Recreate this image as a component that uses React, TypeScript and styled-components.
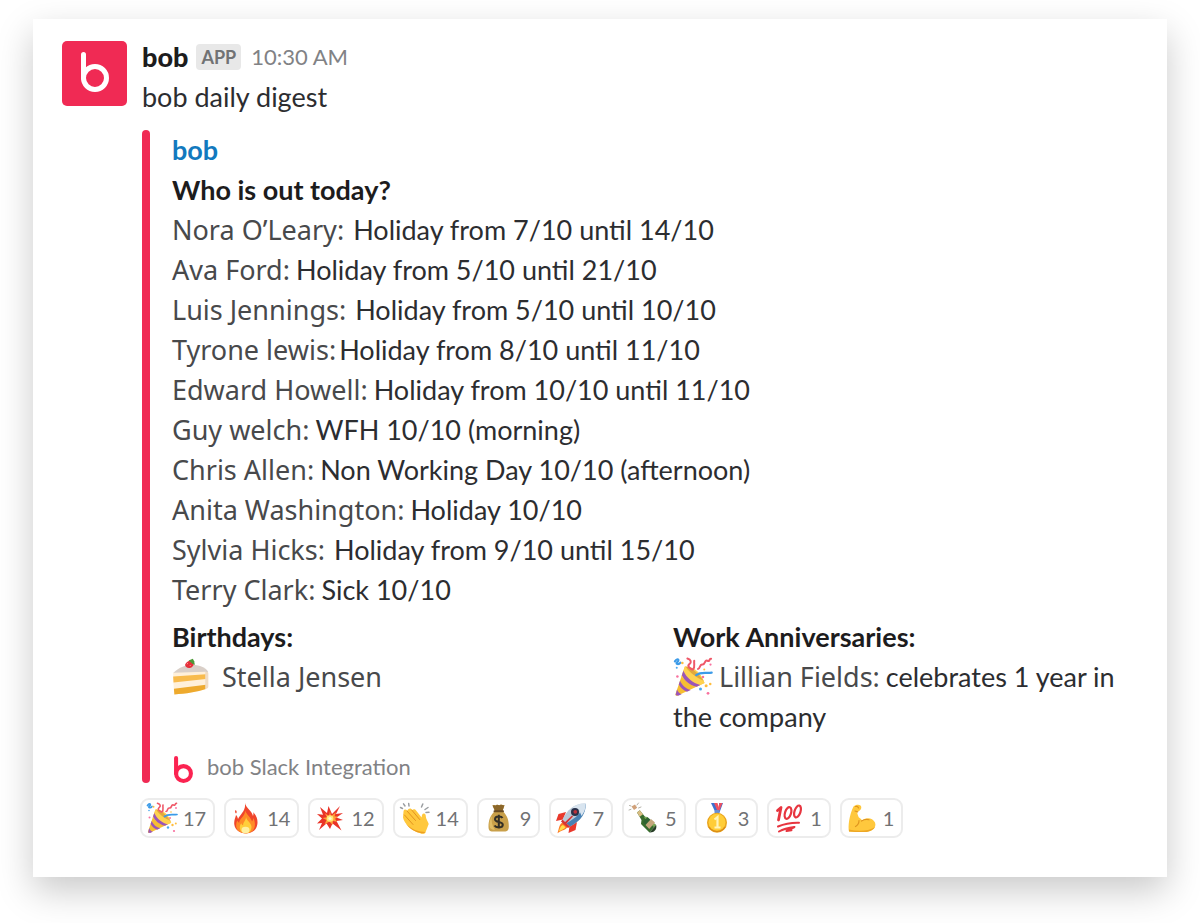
import React from "react";
import styled, { createGlobalStyle } from "styled-components";

const GlobalStyle = createGlobalStyle`
  *, *::before, *::after { box-sizing: border-box; }
  body {
    margin: 0;
    background: #fff;
    color: #2c2d30;
    font-family: Lato, "Noto Sans", sans-serif;
    font-size: 27px;
    line-height: 40px;
  }
  h2, h3, p, ul { margin: 0; padding: 0; }
  ul { list-style: none; }
`;

const Page = styled.main`
  padding: 19px 33px 46px;
`;

const Card = styled.article`
  display: flex;
  align-items: flex-start;
  gap: 15px;
  padding: 18px 29px 39px;
  background: #fff;
  box-shadow: 0 14px 34px rgba(0, 0, 0, 0.21);
`;

const Avatar = styled.div`
  display: flex;
  flex: none;
  align-items: center;
  justify-content: center;
  width: 65px;
  height: 65px;
  margin-top: 4px;
  padding-bottom: 4px;
  border-radius: 5px;
  background: #f02a54;
  color: #fff;
`;

const Message = styled.div`
  flex: 1;
  min-width: 0;
`;

const Header = styled.header`
  display: flex;
  align-items: center;
`;

const Sender = styled.h2`
  font-size: 27px;
  font-weight: 900;
  line-height: 40px;
  color: #1d1c1d;
`;

const AppBadge = styled.span`
  margin: 0 10px 0 8px;
  padding: 0 5px;
  border-radius: 4px;
  background: #e8e8e8;
  color: #717274;
  font-size: 18px;
  font-weight: 700;
  line-height: 26px;
`;

const Time = styled.time`
  color: #818285;
  font-size: 22px;
`;

const Attachment = styled.section`
  display: flex;
  gap: 22px;
  margin-top: 13px;
`;

const Bar = styled.div`
  flex: none;
  width: 8px;
  border-radius: 4px;
  background: #f02a54;
`;

const Body = styled.div`
  flex: 1;
  min-width: 0;
`;

const SourceLink = styled.a`
  display: block;
  color: #1279be;
  font-weight: 700;
  text-decoration: none;
`;

const Heading = styled.h3`
  color: #1d1c1d;
  font-size: 27px;
  font-weight: 700;
  line-height: 40px;
`;

const Line = styled.li`
  display: flex;
  align-items: baseline;
`;

type Space = "tight" | "normal" | "wide";
const spaces: Record<Space, string> = { tight: "3px", normal: "6px", wide: "9px" };

const Name = styled.span<{ $space?: Space }>`
  margin-right: ${(p) => spaces[p.$space ?? "normal"]};
  color: #48494b;
  font-family: "Noto Sans", sans-serif;
  font-size: 27px;
  line-height: 32px;
`;

const Fields = styled.div`
  display: grid;
  grid-template-columns: 1fr 1fr;
  gap: 36px;
  margin-top: 7px;
`;

const FieldIcon = styled.span<{ $gap: number }>`
  display: inline-block;
  width: 40px;
  height: 40px;
  margin-right: ${(p) => p.$gap}px;
  vertical-align: top;

  svg { display: block; }
`;

const Footer = styled.footer`
  display: flex;
  align-items: center;
  gap: 14px;
  padding: 14px 0 0 2px;
  color: #818285;
  font-size: 22px;
  line-height: 32px;
`;

const FooterLogo = styled.span`
  display: flex;
  padding-top: 4px;
  color: #fb2351;
`;

const Reactions = styled.ul`
  display: flex;
  flex-wrap: wrap;
  gap: 9px;
  margin: 15px 0 0 -2px;
`;

const Reaction = styled.button`
  display: flex;
  align-items: center;
  gap: 5px;
  height: 40px;
  padding: 0 7px 0 4px;
  border: 2px solid #ececec;
  border-radius: 9px;
  background: #fff;
  color: #717274;
  font: 20px/36px Lato, sans-serif;
`;

const BobLogo = ({ width, height, stroke }: { width: number; height: number; stroke: number }) => (
  <svg width={width} height={height} viewBox="0 0 28 40" fill="none" stroke="currentColor" strokeWidth={stroke} strokeLinecap="round" aria-hidden="true">
    <path d={`M${stroke / 2} ${stroke / 2}V26`} />
    <circle cx="14" cy="26" r={14 - stroke / 2} />
  </svg>
);

const Popper = () => (
  <>
    <path d="M9.500 7.500 2 29.500c-.3 1 .4 1.700 1.400 1.400l21.800-10.200C22 12 17 8 9.500 7.500z" fill="#f6be32" />
    <path d="m9.500 7.500-2.800 8c3.500 4 7 7 12 8.200l6.500-3C22 12 17 8 9.500 7.500z" fill="#ffd250" />
    <path d="M8.300 11c2.500 5.500 7.500 10 13.500 11.300l-3 1.500C13 22.500 9 18.500 7.100 14.500zM5.600 19c1.800 3.700 4.700 6.500 8.600 7.300l-3 1.400C8.300 26.700 6 24.500 4.600 22zM3.200 26c.8 2 2 3.200 3.700 3.700l-2.800 1.200-2-.5z" fill="#9b55b8" />
    <path d="M10 7.500c5 1 9 4 14.500 11.500-6-3-11-6-14.500-11.500z" fill="#c9862b" opacity=".55" />
    <path d="M1.500 3.500c2-3 4-1.200 2 .5s1 2.500 2.500.5M18.500 14.500c4-3 8-1.200 12.500-2" fill="none" stroke="#3c9be8" strokeWidth="1.700" strokeLinecap="round" />
    <path d="M11.500 1.200c3 1 3.500 3 1.600 4.500s-.2 3 2 4.200M16 10c2-2 .5-4.500 1-7M20 9.500c2 0 1-4 3.500-3.500s1.500-4 4-3 1-2 3-1.600" fill="none" stroke="#ef5868" strokeWidth="1.600" strokeLinecap="round" />
    <g fill="#f8719f"><circle cx="3.500" cy="15.500" r="1" /><circle cx="28" cy="29" r="1.100" /><circle cx="30" cy="6" r=".9" /><circle cx="24" cy="16" r="1" /></g>
    <g fill="#ffbd3d"><circle cx="7.500" cy="4.800" r="1" /><circle cx="26.500" cy="23" r="1.200" /><circle cx="29.800" cy="21.500" r="1" /><circle cx="25" cy="10" r=".8" /></g>
    <g fill="#4aa8ef"><circle cx="22" cy="25.500" r="1.200" /><circle cx="3" cy="8.500" r=".8" /></g>
  </>
);

const Cake = () => (
  <>
    <path d="M1 13.500C6 8.500 12 6.500 17 6.500c7 0 13 3.500 13.500 6.500L20 16z" fill="#d9cfc8" />
    <path d="M1 13.200 28.500 12.500V27c-7 2.500-17 4-26.500 4.500C1.300 26 1 19 1 13.200z" fill="#fff0da" />
    <path d="M1 16.500 28.500 14.500v4L1.300 21.500z" fill="#f8bb4d" />
    <path d="M1.600 26.800 28.500 23.300V27c-7 2.500-17 4-26.500 4.500z" fill="#eeaa2e" />
    <path d="M28 12.800c2-.8 3 .5 2.600 2.200v10c0 1-1 1.600-2.600 2z" fill="#f0dcc4" />
    <path d="M11 6.500c1-3 5-4.500 6.800-3 1.500 2 0 5-2.200 5.500-2.300.8-4.600-.7-4.600-2.500z" fill="#e5303a" />
    <path d="M14 3 17.500 1.500l1.200 2 .6 3.200-2.600-1.400z" fill="#4c9a38" />
    <path d="m12.500 6 1-.8M15 7.500l.8-.8" stroke="#ff9b91" strokeWidth=".8" />
  </>
);

const Fire = () => (
  <>
    <path d="M15 1c1 5 7 8 8 13 .6-1.500.6-3 0-4 4 4 5 8.500 4.300 12.500C26.500 28 22 31.500 16 31.500S5 28 4.300 22.500C3.800 18.500 5.300 16 6 13c1 1 1.800 2.500 2 4C10 12.500 16 9 15 1z" fill="#f0452b" />
    <path d="M15 8.500c1.500 4 6 7 7 11 .8-.8 1.200-2 1.200-3.500C26 20 26.500 31.300 16 31.300S5 23.500 7.200 18.500c.5 1 1.400 2 2 2.300C9.500 16 15.500 14 15 8.500z" fill="#ff8b27" />
    <path d="M16 15c.5 3.500 5.500 6 5.500 9.800 0 4.200-2.500 6.500-5.500 6.500s-6.200-2-6.200-6c0-2 .8-3.200 1.500-4 .4 1.200 1 1.800 1.800 2C13 20 16 18.500 16 15z" fill="#ffce3a" />
    <ellipse cx="15.500" cy="28" rx="4" ry="3.300" fill="#fff0a0" />
    <path d="M5.500 8c1.500 1 1.500 2.500.5 3.500C4.800 10.500 4.800 9.300 5.500 8z" fill="#f0452b" />
  </>
);

const Boom = () => (
  <>
    <path d="m18 12 8-8-4 8 7-1-6.500 4.500 6.500 2.500-6.500 1 5 9.500-9-7-2.500 5.500-3.500-5.500L5 28l3-7-5 .5 5-5L3 12l6 .8L6 5l7 6 1.500-7z" fill="#e93428" />
    <path d="m17 14.200 5-4-1.500 4 4 .5-3.500 2 2 3-4-.6-.5 4-3-3.600-5 3 2-4.500-4-2 4.500-.8-2.200-4 4.200 2.700L16 9z" fill="#ff9f38" />
    <circle cx="16" cy="16.500" r="3.300" fill="#ffe877" />
    <circle cx="16" cy="16.500" r="1.600" fill="#fffad5" />
  </>
);

const Clap = () => (
  <>
    <path d="M4 15.500 4.500 9.500c.3-2.300 2.600-2.400 3.500-.8l1.500-1.600c1.300-1.300 3-.6 3.600.8 1.500-1.300 3.200-.7 4 .5l5.500 7c.2-2.200.6-4.200 2.500-4 2 .2 1.500 3 2.300 5.300.8 2.300 1.800 3.300 2.300 5.300l-3.500 9c-1.500 1.300-3.500 1-5.500 0C12 28.500 5.500 22 4 15.500z" fill="#ffc83d" />
    <path d="m8 9 8.500 9.500M12.700 8l8 9.500M5.500 13l8.500 9.500" fill="none" stroke="#e2931f" strokeWidth="1" strokeLinecap="round" />
    <path d="M7 22c4 5 9.500 8.500 16 9.300 1.800 0 3-.3 3.500-1.300C19 30 12.500 27 7 22z" fill="#ed9f22" />
    <path d="m3.500 6.500-2-1M6 4 4.500 1.800M10 4l-.3-2.500M22.500 5 23.800 2M26 7.500l3-2M27 10.500l3-.2" fill="none" stroke="#9a9da0" strokeWidth="1.500" strokeLinecap="round" />
  </>
);

const MoneyBag = () => (
  <>
    <path d="M12 9 9.500 3.500c2-.6 3 .4 4-.5s2.500 1 3.500 0 3 .5 4.500.3L19.500 9c4.500 4 6.500 9 6.300 15.500-.1 4-1.500 5-4.500 5H9.800c-3 0-4.300-1-4.300-5C5.500 18 7.500 13 12 9z" fill="#c9a04a" />
    <path d="M12 9 9.500 3.500c2-.6 3 .4 4-.5s2.500 1 3.500 0 3 .5 4.500.3L19.500 9z" fill="#8c672a" />
    <path d="M9 14c-2.500 4-3 8-2 12 1 1.300 3.500 1.800 5 1.800C9 24 8 19 9 14z" fill="#e0bd67" />
    <path d="M11.500 9.300h8.500" stroke="#684b24" strokeWidth="2" strokeLinecap="round" />
    <path d="M19.500 16c-1-2-7.500-2.300-7.500 1.200 0 3.800 7.800 1.800 7.800 5.600 0 3.500-6.800 3.300-8.300.8M15.800 12.800v13.500" fill="none" stroke="#343026" strokeWidth="2" />
  </>
);

const Rocket = () => (
  <>
    <path d="M11 10 3.500 12 1 19l7-1.500zM22 20l-1.500 8L13.500 31l1-7z" fill="#e9392c" />
    <path d="m8.500 20 4.500 4c-1 4-6.500 4-10.500 7.200C4 27 4 21.500 8.500 20z" fill="#ff7a24" />
    <path d="m8 23 2.500 2.200c-1 2-4.500 2.500-6.500 4.300C4.800 27 5.200 24 8 23z" fill="#ffe04a" />
    <path d="M30.500 1.500c1 9-4.500 17.500-15.500 23l-7.500-7C12 7.500 20 1 30.500 1.500z" fill="#b9c9d8" />
    <path d="M30.500 1.500c1 9-4.500 17.500-15.500 23l-3.500-3.300C21 16 27.500 10 30.500 1.500z" fill="#4781b4" />
    <path d="M30.500 1.500C25 1.300 20.500 3 17 6l7 1.500 2.500 6.500c3-4 4.500-8 4-12.500z" fill="#d8e4ef" />
    <circle cx="20" cy="10" r="4" fill="#28314a" /><circle cx="20.300" cy="9.800" r="1.900" fill="#b8323c" />
    <path d="m7.500 17.500 7.500 7-2 1.500-7-6.500zM8 22l9-8.500 1 1-8 8.500z" fill="#d43536" />
  </>
);

const Bottle = () => (
  <>
    <path d="m3.500 4.500 3.500-2 2.200 3.300L6 8z" fill="#d0a17a" />
    <path d="m9 10.500 2.800-2.200 5 6.200L28 23l-6.500 7.500-8.500-8.500.5-4z" fill="#386c2d" />
    <path d="m9 10.500 2.800-2.200 3.200 4-3.300 2.500z" fill="#d9bd83" />
    <path d="m16 15.500 2-1L28 23 25.800 25z" fill="#78a953" />
    <path d="m15 20 4.500-5 6.500 6-5.500 6.200z" fill="#2e6332" />
    <path d="m17.500 23 5.500-6 4 3.500-5.800 6.500z" fill="#c5a77c" />
    <path d="m21.500 30.500 6.700-7.500c1 4.200-2 7.800-6.700 7.500z" fill="#263d25" />
    <path d="m1.500 3.500 1.500.5M1 8l2-.7M9 3l1.500-2M10.500 6l2.500-1" stroke="#b5b3a9" strokeWidth="1" strokeLinecap="round" />
  </>
);

const Medal = () => (
  <>
    <path d="m10 1 4.500 9.500h3L14 1z" fill="#3b70cf" /><path d="m13 1 3.500 8 1.500-3L16.500 1z" fill="#ee5360" />
    <path d="m18 1 .5 6-2 3.500h2L22 1z" fill="#3b70cf" /><path d="m18.500 1-2 7.500 1.500 1L21.500 1z" fill="#ed5061" />
    <rect x="13.500" y="8" width="5" height="4" rx="1" fill="#6790d5" />
    <circle cx="16" cy="20.800" r="10" fill="#e9a41d" />
    <circle cx="16" cy="20.300" r="8.500" fill="#ffcd38" />
    <path d="m13.500 17.500 3-2.500v10.500M13.500 25.500h6" fill="none" stroke="#fff4ba" strokeWidth="2.200" />
    <path d="M8 25c3.500 6 12.500 6 16 0" fill="none" stroke="#d98b18" strokeWidth="1.200" />
  </>
);

const Hundred = () => (
  <g fill="none" stroke="#e7353f" strokeLinecap="round" strokeLinejoin="round">
    <path d="M4.500 8.500 8 5.500 5.500 18" strokeWidth="2.800" />
    <ellipse cx="15" cy="11" rx="3" ry="6" transform="rotate(18 15 11)" strokeWidth="2.200" />
    <ellipse cx="24.500" cy="9.500" rx="3" ry="6.200" transform="rotate(18 24.500 9.500)" strokeWidth="2.200" />
    <path d="M5 24.500C12 21.500 19 20.500 26 20.700M6 29.500c4.500-2.500 8-3.500 15.500-4.500l-8 4 5-.8" strokeWidth="2" />
  </g>
);

const Muscle = () => (
  <>
    <path d="M7.500 4.500C9.500 2.500 13 2 14.500 3.500c1.800 2 .4 4.500-1.800 5.700l-1.500.5c0 2 .8 3.500 1.500 5.500 1.500 1 2.500 2.200 3.500 3.200 4.300-3.700 10.500-2.500 12.800 2.100 2 5.700-3.500 9.300-10.500 9.500-5.300.3-9.500-.2-15.500-.5C1.800 25 3.300 12.500 7.500 4.500z" fill="#ffc83d" />
    <path d="M13 18.500c0 2.500-1.200 4.700-3.500 6M15.500 19c2.500-1.500 5-2 7.500-1.200M9 9l2.700.8M9.500 4.500c1.500-.5 2.500 0 3 1.500" fill="none" stroke="#df951f" strokeWidth="1.200" strokeLinecap="round" />
    <path d="M3 27.500c9 2 19 2 26-2.500-2 3.500-6 4.900-10.500 5-5.300.3-9.500-.2-15.500-.5z" fill="#eda725" />
  </>
);

const Emoji = ({ art: Art, size = 32 }: { art: React.FC; size?: number }) => (
  <svg width={size} height={size} viewBox="0 0 32 32" aria-hidden="true">
    <Art />
  </svg>
);

const absences: { name: string; detail: string; space?: Space }[] = [
  { name: "Nora O’Leary:", detail: "Holiday from 7/10 until 14/10", space: "wide" },
  { name: "Ava Ford:", detail: "Holiday from 5/10 until 21/10" },
  { name: "Luis Jennings:", detail: "Holiday from 5/10 until 10/10", space: "wide" },
  { name: "Tyrone lewis:", detail: "Holiday from 8/10 until 11/10", space: "tight" },
  { name: "Edward Howell:", detail: "Holiday from 10/10 until 11/10" },
  { name: "Guy welch:", detail: "WFH 10/10 (morning)" },
  { name: "Chris Allen:", detail: "Non Working Day 10/10 (afternoon)" },
  { name: "Anita Washington:", detail: "Holiday 10/10" },
  { name: "Sylvia Hicks:", detail: "Holiday from 9/10 until 15/10", space: "wide" },
  { name: "Terry Clark:", detail: "Sick 10/10" },
];

const reactions: { label: string; art: React.FC; count: number }[] = [
  { label: "Party popper", art: Popper, count: 17 },
  { label: "Fire", art: Fire, count: 14 },
  { label: "Collision", art: Boom, count: 12 },
  { label: "Clapping", art: Clap, count: 14 },
  { label: "Money bag", art: MoneyBag, count: 9 },
  { label: "Rocket", art: Rocket, count: 7 },
  { label: "Champagne", art: Bottle, count: 5 },
  { label: "Gold medal", art: Medal, count: 3 },
  { label: "Hundred points", art: Hundred, count: 1 },
  { label: "Flexed arm", art: Muscle, count: 1 },
];

export default function App() {
  return (
    <>
      <GlobalStyle />
      <Page>
        <Card>
          <Avatar><BobLogo width={28} height={40} stroke={5} /></Avatar>
          <Message>
            <Header>
              <Sender>bob</Sender>
              <AppBadge>APP</AppBadge>
              <Time dateTime="10:30">10:30 AM</Time>
            </Header>
            <p>bob daily digest</p>
            <Attachment>
              <Bar />
              <Body>
                <SourceLink href="#bob">bob</SourceLink>
                <Heading>Who is out today?</Heading>
                <ul>
                  {absences.map((a) => (
                    <Line key={a.name}>
                      <Name $space={a.space}>{a.name}</Name>
                      <span>{a.detail}</span>
                    </Line>
                  ))}
                </ul>
                <Fields>
                  <div>
                    <Heading>Birthdays:</Heading>
                    <p>
                      <FieldIcon $gap={10}><Emoji art={Cake} size={38} /></FieldIcon>
                      <Name>Stella Jensen</Name>
                    </p>
                  </div>
                  <div>
                    <Heading>Work Anniversaries:</Heading>
                    <p>
                      <FieldIcon $gap={6}><Emoji art={Popper} size={40} /></FieldIcon>
                      <Name>Lillian Fields:</Name>
                      celebrates 1 year in the company
                    </p>
                  </div>
                </Fields>
                <Footer>
                  <FooterLogo><BobLogo width={19} height={27} stroke={6} /></FooterLogo>
                  <span>bob Slack Integration</span>
                </Footer>
              </Body>
            </Attachment>
            <Reactions>
              {reactions.map((r) => (
                <li key={r.label}>
                  <Reaction type="button" aria-label={`${r.label}: ${r.count}`}>
                    <Emoji art={r.art} />
                    <span>{r.count}</span>
                  </Reaction>
                </li>
              ))}
            </Reactions>
          </Message>
        </Card>
      </Page>
    </>
  );
}
